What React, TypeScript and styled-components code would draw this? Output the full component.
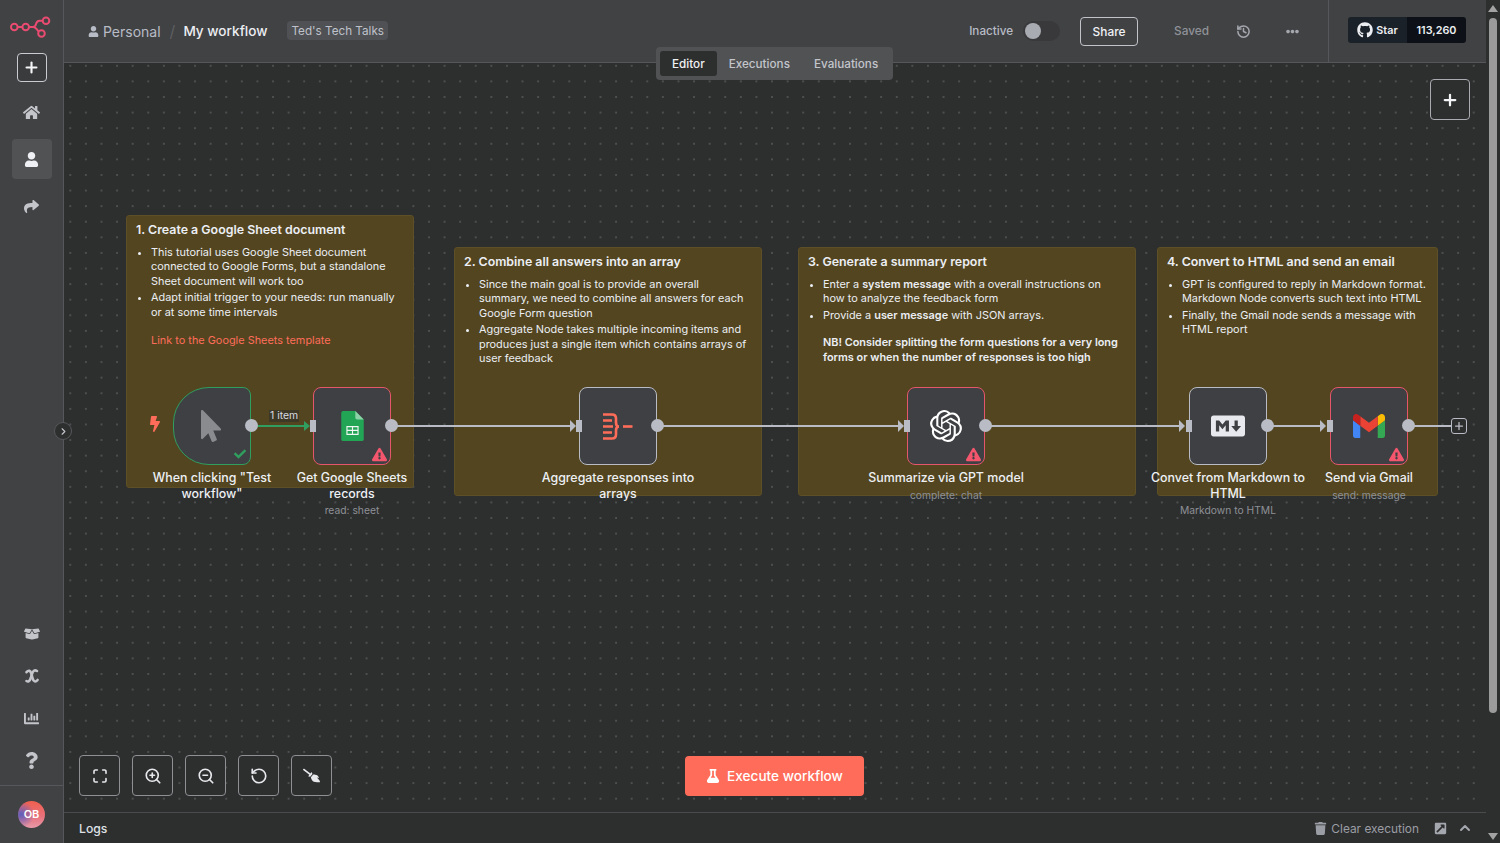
import React from 'react';
import { styled, createGlobalStyle } from 'styled-components';
import {
  FaBolt,
  FaBoxOpen,
  FaBroom,
  FaChartBar,
  FaCheck,
  FaEllipsisH,
  FaExclamationTriangle,
  FaExternalLinkSquareAlt,
  FaFlask,
  FaGithub,
  FaHome,
  FaMarkdown,
  FaMousePointer,
  FaQuestion,
  FaShare,
  FaTrash,
  FaUser,
} from 'react-icons/fa';
import { SiOpenai } from 'react-icons/si';
import { ChevronRight, ChevronUp, History, Maximize, Plus, RotateCcw, ZoomIn, ZoomOut } from 'lucide-react';

const CANVAS_X = 64;
const CANVAS_Y = 63;
const EDGE_Y = 426 - CANVAS_Y;
const LINE = '#b9bcc4';

const GlobalStyle = createGlobalStyle`
  html, body {
    margin: 0;
    height: 100%;
    overflow: hidden;
    background: #2d2e2e;
    font-family: Inter, "Liberation Sans", sans-serif;
  }
  * { box-sizing: border-box; }
`;

const Page = styled.div`
  display: flex;
  width: 1500px;
  height: 843px;
  overflow: hidden;
`;

const Sidebar = styled.aside`
  width: 64px;
  flex-shrink: 0;
  display: flex;
  flex-direction: column;
  align-items: center;
  background: #414244;
  border-right: 1px solid #56575a;
  color: #c3c5cb;
`;

const Logo = styled.svg`
  width: 44px;
  height: 28px;
  margin-top: 13px;
  margin-left: -1px;
`;

const AddButton = styled.button`
  width: 30px;
  height: 29px;
  margin-top: 12px;
  padding: 0;
  display: flex;
  align-items: center;
  justify-content: center;
  background: #3a3b3d;
  border: 1px solid #c9cbd0;
  border-radius: 4px;
  color: #f4f5f7;
`;

const SideItem = styled.div<{ $active?: boolean }>`
  width: 40px;
  height: 40px;
  display: flex;
  align-items: center;
  justify-content: center;
  border-radius: 4px;
  font-size: 16px;
  background: ${(p) => (p.$active ? '#515254' : 'transparent')};
  color: ${(p) => (p.$active ? '#eef0f4' : '#c3c5cb')};
`;

const TopItems = styled.div`
  display: flex;
  flex-direction: column;
  gap: 7px;
  margin-top: 10px;
`;

const BottomItems = styled.div`
  display: flex;
  flex-direction: column;
  gap: 2px;
  margin-top: auto;
`;

const AvatarRow = styled.div`
  width: 100%;
  height: 58px;
  margin-top: 5px;
  padding-bottom: 1px;
  border-top: 1px solid #56575a;
  display: flex;
  align-items: center;
  justify-content: center;
`;

const Avatar = styled.div`
  width: 27px;
  height: 27px;
  border-radius: 50%;
  display: flex;
  align-items: center;
  justify-content: center;
  font-size: 11px;
  font-weight: 600;
  color: #fff;
  background: radial-gradient(circle at 12% 50%, #5b5fc0 0, rgba(91, 95, 192, 0) 48%),
    linear-gradient(180deg, #f0604f 0%, #e8707a 55%, #e79aaa 100%);
`;

const Main = styled.main`
  position: relative;
  flex: 1;
  min-width: 0;
  display: flex;
  flex-direction: column;
`;

const Header = styled.header`
  height: 63px;
  flex-shrink: 0;
  display: flex;
  align-items: center;
  padding-left: 24px;
  background: #414244;
  border-bottom: 1px solid #56575a;
`;

const Crumb = styled.span`
  display: flex;
  align-items: center;
  gap: 4px;
  font-size: 14px;
  color: #b8bcc6;
`;

const Slash = styled.span`
  margin: 0 8px 0 9px;
  font-size: 16px;
  color: #5d5e61;
`;

const WorkflowName = styled.span`
  font-size: 13.6px;
  font-weight: 500;
  color: #eceef3;
`;

const Tag = styled.span`
  margin: -1px 0 0 20px;
  height: 19px;
  padding: 0 4px;
  display: flex;
  align-items: center;
  border-radius: 4px;
  background: #505154;
  font-size: 11.7px;
  color: #bfc2cb;
`;

const HeaderRight = styled.div`
  margin-left: auto;
  height: 100%;
  display: flex;
  align-items: center;
`;

const Inactive = styled.span`
  font-size: 11.7px;
  font-weight: 500;
  color: #b8bcc6;
`;

const Toggle = styled.span`
  width: 37px;
  height: 20px;
  margin-left: 10px;
  padding: 2px;
  border-radius: 10px;
  background: #39393b;
`;

const Knob = styled.span`
  display: block;
  width: 16px;
  height: 16px;
  border-radius: 50%;
  background: #a9abb3;
`;

const ShareButton = styled.button`
  width: 58px;
  height: 29px;
  margin-left: 20px;
  padding: 0;
  background: transparent;
  border: 1px solid #c1c3c9;
  border-radius: 4px;
  font: 500 11.9px Inter, sans-serif;
  color: #f0f1f4;
`;

const Saved = styled.span`
  margin-left: 36px;
  font-size: 11.8px;
  font-weight: 500;
  color: #8f9298;
`;

const IconSlot = styled.span<{ $left: number }>`
  display: flex;
  margin-left: ${(p) => p.$left}px;
  color: #a4a7ae;
`;

const GithubArea = styled.div`
  height: 100%;
  margin-left: 29px;
  padding: 0 20px 2px 19px;
  display: flex;
  align-items: center;
  border-left: 1px solid #56575a;
`;

const StarPart = styled.span`
  height: 26px;
  width: 59px;
  display: flex;
  align-items: center;
  justify-content: center;
  gap: 3px;
  background: #1b2128;
  border-radius: 3px 0 0 3px;
  font-size: 10.8px;
  font-weight: 600;
  color: #eceef1;
`;

const CountPart = styled.span`
  height: 26px;
  width: 59px;
  display: flex;
  align-items: center;
  justify-content: center;
  background: #0d1117;
  border-radius: 0 3px 3px 0;
  font-size: 10.8px;
  font-weight: 600;
  color: #eceef1;
`;

const Tabs = styled.nav`
  position: absolute;
  left: 592px;
  top: 47px;
  width: 237px;
  height: 33px;
  padding: 4px;
  display: flex;
  gap: 0;
  background: #515254;
  border-radius: 4px;
  z-index: 5;
`;

const Tab = styled.span<{ $active?: boolean }>`
  height: 25px;
  padding: 0 12px;
  display: flex;
  align-items: center;
  border-radius: 3px;
  font-size: 11.7px;
  font-weight: 500;
  background: ${(p) => (p.$active ? '#2d2e2e' : 'transparent')};
  color: ${(p) => (p.$active ? '#f0f1f4' : '#c3c5cb')};
`;

const Canvas = styled.section`
  position: relative;
  flex: 1;
  background-color: #2d2e2e;
  background-image: radial-gradient(circle, #6a6b6e 0.5px, transparent 0.9px);
  background-size: 15.6px 15.6px;
  background-position: -1.5px -5px;
`;

const Note = styled.div<{ $x: number; $y: number; $w: number; $h: number }>`
  position: absolute;
  left: ${(p) => p.$x - CANVAS_X}px;
  top: ${(p) => p.$y - CANVAS_Y}px;
  width: ${(p) => p.$w}px;
  height: ${(p) => p.$h}px;
  padding: 6px 10.5px 6px 9px;
  background: #524520;
  border: 1px solid #5d4f26;
  border-radius: 3px;
  color: #eceef3;
`;

const NoteTitle = styled.div`
  font-size: 12.4px;
  font-weight: 600;
  line-height: 16px;
`;

const NoteList = styled.ul`
  margin: 6.5px 0 0;
  padding-left: 15px;
  font-size: 10.9px;
  line-height: 14.5px;

  li + li {
    margin-top: 2px;
  }

  li::marker {
    font-size: 10px;
  }

  strong {
    font-weight: 600;
  }
`;

const NoteLink = styled.div`
  margin: 14px 0 0 15px;
  font-size: 10.9px;
  line-height: 14.5px;
  color: #ff6d5a;
`;

const NoteWarning = styled.div`
  margin: 13px 0 0 15px;
  font-size: 10.9px;
  font-weight: 600;
  line-height: 15px;
`;

const Edges = styled.svg`
  position: absolute;
  left: 0;
  top: 0;
  width: 100%;
  height: 100%;
  pointer-events: none;
`;

const Node = styled.div<{ $x: number }>`
  position: absolute;
  left: ${(p) => p.$x - CANVAS_X - 41}px;
  top: ${387 - CANVAS_Y}px;
  width: 160px;
  display: flex;
  flex-direction: column;
  align-items: center;
`;

const NodeBox = styled.div<{ $border: string; $trigger?: boolean }>`
  position: relative;
  width: 78px;
  height: 78px;
  display: flex;
  align-items: center;
  justify-content: center;
  background: #3f4043;
  border: 1.5px solid ${(p) => p.$border};
  border-radius: ${(p) => (p.$trigger ? '36px 8px 8px 36px' : '8px')};
`;

const InHandle = styled.span`
  position: absolute;
  left: -4.5px;
  top: 31.5px;
  width: 6px;
  height: 12px;
  background: ${LINE};
`;

const OutHandle = styled.span`
  position: absolute;
  right: -8px;
  top: 31px;
  width: 13px;
  height: 13px;
  border-radius: 50%;
  background: ${LINE};
`;

const WarnIcon = styled.span`
  position: absolute;
  right: 3px;
  bottom: 2px;
  display: flex;
  font-size: 15px;
  color: #f4566e;
`;

const CheckIcon = styled.span`
  position: absolute;
  right: 4px;
  bottom: 4px;
  display: flex;
  font-size: 12px;
  color: #2f9e5f;
`;

const Bolt = styled.span`
  position: absolute;
  left: -27px;
  top: 28px;
  display: flex;
  font-size: 16px;
  color: #ff6d5a;
`;

const CursorIcon = styled.span`
  display: flex;
  margin-left: -2px;
  font-size: 32px;
  color: #8a8b8e;
`;

const NodeLabel = styled.div`
  max-width: 156px;
  margin-top: 5px;
  font-size: 12.4px;
  font-weight: 500;
  line-height: 15.5px;
  text-align: center;
  color: #eef0f4;
`;

const NodeSub = styled.div`
  margin-top: 3px;
  font-size: 10.3px;
  line-height: 13px;
  text-align: center;
  color: #8e9196;
`;

const ItemCount = styled.span`
  position: absolute;
  left: ${269 - CANVAS_X}px;
  top: ${410 - CANVAS_Y}px;
  padding: 0 1px;
  background: rgba(45, 46, 46, 0.55);
  font-size: 10.4px;
  line-height: 12px;
  color: #d9dbe0;
`;

const EndPlus = styled.span`
  position: absolute;
  left: ${1451 - CANVAS_X}px;
  top: ${418 - CANVAS_Y}px;
  width: 16px;
  height: 16px;
  display: flex;
  align-items: center;
  justify-content: center;
  background: #2d2e2e;
  border: 1.5px solid ${LINE};
  border-radius: 3px;
  color: ${LINE};
`;

const CollapseToggle = styled.span`
  position: absolute;
  left: -10px;
  top: ${422 - CANVAS_Y}px;
  width: 18px;
  height: 18px;
  display: flex;
  align-items: center;
  justify-content: center;
  border-radius: 50%;
  background: #2d2e2e;
  border: 1px solid #56575a;
  color: #c3c5cb;
`;

const CanvasAdd = styled.button`
  position: absolute;
  left: ${1430 - CANVAS_X}px;
  top: ${79 - CANVAS_Y}px;
  width: 40px;
  height: 41px;
  padding: 0;
  display: flex;
  align-items: center;
  justify-content: center;
  background: #2d2e2e;
  border: 1px solid #a9abb0;
  border-radius: 4px;
  color: #f4f5f7;
`;

const CanvasTools = styled.div`
  position: absolute;
  left: 15px;
  bottom: 16px;
  display: flex;
  gap: 12px;
`;

const ToolButton = styled.button`
  width: 41px;
  height: 41px;
  padding: 0;
  display: flex;
  align-items: center;
  justify-content: center;
  background: #2d2e2e;
  border: 1px solid #8f9094;
  border-radius: 4px;
  color: #e8e9ed;
`;

const BroomGlyph = styled.span`
  display: flex;
  transform: scaleX(-1);
`;

const ExecuteButton = styled.button`
  position: absolute;
  left: ${685 - CANVAS_X}px;
  bottom: 16px;
  width: 179px;
  height: 40px;
  padding: 0;
  display: flex;
  align-items: center;
  justify-content: center;
  gap: 7px;
  background: #ff6d5a;
  border: none;
  border-radius: 4px;
  font: 500 13.6px Inter, sans-serif;
  color: #fff;
`;

const LogsBar = styled.footer`
  height: 31px;
  flex-shrink: 0;
  display: flex;
  align-items: center;
  padding: 0 13px 0 15px;
  background: #2d2e2e;
  border-top: 1px solid #4a4b4d;
`;

const LogsTitle = styled.span`
  font-size: 12.2px;
  font-weight: 500;
  color: #dfe1e6;
`;

const LogsActions = styled.div`
  margin-left: auto;
  display: flex;
  align-items: center;
  color: #9a9da4;
`;

const ClearText = styled.span`
  margin-left: 4px;
  font-size: 11.9px;
  color: #9a9da4;
`;

const Scrollbar = styled.div`
  width: 14px;
  flex-shrink: 0;
  display: flex;
  flex-direction: column;
  align-items: center;
  background: #2d2e2e;
`;

const ScrollArrow = styled.span<{ $down?: boolean }>`
  width: 0;
  height: 0;
  margin: ${(p) => (p.$down ? 'auto 0 3px' : '5px 0 0')};
  border-left: 5px solid transparent;
  border-right: 5px solid transparent;
  ${(p) => (p.$down ? 'border-top: 7px solid #a3a3a3;' : 'border-bottom: 7px solid #a3a3a3;')}
`;

const ScrollThumb = styled.span`
  width: 8px;
  height: 695px;
  margin-top: 6px;
  border-radius: 4px;
  background: #9b9b9b;
`;

function SheetsIcon() {
  return (
    <svg width="23" height="30" viewBox="0 0 24 32">
      <path d="M2 0h13l9 9v21a2 2 0 0 1-2 2H2a2 2 0 0 1-2-2V2a2 2 0 0 1 2-2z" fill="#23a556" />
      <path d="M15 0l9 9h-7a2 2 0 0 1-2-2z" fill="#8ed1a8" />
      <path d="M5.500 16h13v9.500h-13z M6.700 17.200v2.900h4.700v-2.900z M12.600 17.200v2.900h4.700v-2.900z M6.700 21.300v3h4.700v-3z M12.600 21.300v3h4.700v-3z" fill="#f1f7f3" fillRule="evenodd" />
    </svg>
  );
}

function AggregateIcon() {
  return (
    <svg width="30" height="27" viewBox="0 0 30 27" fill="none" stroke="#ff6d5a" strokeWidth="2.600">
      <path d="M0 1.500h9c2.500 0 4 1.500 4 4v4c0 2.500 1 4 3 4-2 0-3 1.500-3 4v4c0 2.500-1.500 4-4 4H0" />
      <path d="M0 7.500h9M0 13.500h10M0 19.500h9" />
      <path d="M20 13.500h9.500" />
    </svg>
  );
}

function GmailIcon() {
  return (
    <svg width="32" height="24" viewBox="52 42 88 66">
      <path fill="#4285f4" d="M58 108h14V74L52 59v43c0 3.32 2.69 6 6 6" />
      <path fill="#34a853" d="M120 108h14c3.32 0 6-2.69 6-6V59l-20 15" />
      <path fill="#fbbc04" d="M120 48v26l20-15v-8c0-7.42-8.47-11.65-14.4-7.2" />
      <path fill="#ea4335" d="M72 74V48l24 18 24-18v26L96 92" />
      <path fill="#c5221f" d="M52 51v8l20 15V48l-5.6-4.2c-5.94-4.45-14.4-.22-14.4 7.2" />
    </svg>
  );
}

function VariableIcon() {
  return (
    <svg width="16" height="16" viewBox="0 0 16 16" fill="none" stroke="currentColor" strokeWidth="2.600" strokeLinecap="round">
      <path d="M2.500 4.200C4.500 1.800 6.500 2.400 7.400 6l1.200 4.400c.9 3.400 3 4 5 1.600" />
      <path d="M13 3c-2.200-1.400-3.800-.6-5 2.800L6.800 10C5.600 13.400 4.200 14 2.500 13" />
    </svg>
  );
}

function N8nLogo() {
  return (
    <Logo viewBox="0 0 44 28" fill="none" stroke="#ea4b71" strokeWidth="2">
      <circle cx="5.300" cy="14" r="3.300" />
      <circle cx="16.700" cy="14" r="3.300" />
      <circle cx="37" cy="7.700" r="3.300" />
      <circle cx="32.500" cy="20.500" r="3.300" />
      <path d="M8.600 14H13.400M20 14h4c4.500 0 1.500-6.300 6.500-6.300h3.200M24 14c2.500 0 3.500 1.500 5.500 4.500" />
    </Logo>
  );
}

function EdgeLines() {
  const arrows = [576, 904, 1185, 1326];
  const x = (page: number) => page - CANVAS_X;
  return (
    <Edges>
      <path d={`M${x(251)} ${EDGE_Y}H${x(306)}`} stroke="#2f9e5f" strokeWidth="2" />
      <path d={`M${x(304)} ${EDGE_Y - 5}l6 5-6 5z`} fill="#2f9e5f" />
      <path d={`M${x(391)} ${EDGE_Y}H${x(572)}`} stroke={LINE} strokeWidth="2" />
      <path d={`M${x(657)} ${EDGE_Y}H${x(900)}`} stroke={LINE} strokeWidth="2" />
      <path d={`M${x(985)} ${EDGE_Y}H${x(1181)}`} stroke={LINE} strokeWidth="2" />
      <path d={`M${x(1267)} ${EDGE_Y}H${x(1322)}`} stroke={LINE} strokeWidth="2" />
      <path d={`M${x(1408)} ${EDGE_Y}H${x(1451)}`} stroke={LINE} strokeWidth="2" />
      {arrows.map((a) => (
        <path key={a} d={`M${x(a - 6)} ${EDGE_Y - 6}l6 6-6 6z`} fill={LINE} />
      ))}
    </Edges>
  );
}

export default function App() {
  return (
    <>
      <GlobalStyle />
      <Page>
        <Sidebar>
          <N8nLogo />
          <AddButton>
            <Plus size={17} strokeWidth={3} />
          </AddButton>
          <TopItems>
            <SideItem><FaHome size={17} /></SideItem>
            <SideItem $active><FaUser size={15} /></SideItem>
            <SideItem><FaShare size={15} /></SideItem>
          </TopItems>
          <BottomItems>
            <SideItem><FaBoxOpen size={16} /></SideItem>
            <SideItem><VariableIcon /></SideItem>
            <SideItem><FaChartBar size={15} /></SideItem>
            <SideItem><FaQuestion size={17} /></SideItem>
          </BottomItems>
          <AvatarRow>
            <Avatar>OB</Avatar>
          </AvatarRow>
        </Sidebar>

        <Main>
          <Header>
            <Crumb>
              <FaUser size={11} />
              Personal
            </Crumb>
            <Slash>/</Slash>
            <WorkflowName>My workflow</WorkflowName>
            <Tag>Ted's Tech Talks</Tag>
            <HeaderRight>
              <Inactive>Inactive</Inactive>
              <Toggle><Knob /></Toggle>
              <ShareButton>Share</ShareButton>
              <Saved>Saved</Saved>
              <IconSlot $left={27}><History size={15} strokeWidth={2.4} /></IconSlot>
              <IconSlot $left={35}><FaEllipsisH size={13} /></IconSlot>
              <GithubArea>
                <StarPart><FaGithub size={16} />Star</StarPart>
                <CountPart>113,260</CountPart>
              </GithubArea>
            </HeaderRight>
          </Header>

          <Tabs>
            <Tab $active>Editor</Tab>
            <Tab>Executions</Tab>
            <Tab>Evaluations</Tab>
          </Tabs>

          <Canvas>
            <Note $x={126} $y={215} $w={288} $h={273}>
              <NoteTitle>1. Create a Google Sheet document</NoteTitle>
              <NoteList>
                <li>This tutorial uses Google Sheet document connected to Google Forms, but a standalone Sheet document will work too</li>
                <li>Adapt initial trigger to your needs: run manually or at some time intervals</li>
              </NoteList>
              <NoteLink>Link to the Google Sheets template</NoteLink>
            </Note>
            <Note $x={454} $y={247} $w={308} $h={249}>
              <NoteTitle>2. Combine all answers into an array</NoteTitle>
              <NoteList>
                <li>Since the main goal is to provide an overall summary, we need to combine all answers for each Google Form question</li>
                <li>Aggregate Node takes multiple incoming items and produces just a single item which contains arrays of user feedback</li>
              </NoteList>
            </Note>
            <Note $x={798} $y={247} $w={338} $h={249}>
              <NoteTitle>3. Generate a summary report</NoteTitle>
              <NoteList>
                <li>Enter a <strong>system message</strong> with a overall instructions on how to analyze the feedback form</li>
                <li>Provide a <strong>user message</strong> with JSON arrays.</li>
              </NoteList>
              <NoteWarning>NB! Consider splitting the form questions for a very long forms or when the number of responses is too high</NoteWarning>
            </Note>
            <Note $x={1157} $y={247} $w={281} $h={249}>
              <NoteTitle>4. Convert to HTML and send an email</NoteTitle>
              <NoteList>
                <li>GPT is configured to reply in Markdown format. Markdown Node converts such text into HTML</li>
                <li>Finally, the Gmail node sends a message with HTML report</li>
              </NoteList>
            </Note>

            <EdgeLines />
            <ItemCount>1 item</ItemCount>

            <Node $x={173}>
              <NodeBox $border="#2f9e5f" $trigger>
                <Bolt><FaBolt /></Bolt>
                <CursorIcon><FaMousePointer /></CursorIcon>
                <CheckIcon><FaCheck /></CheckIcon>
                <OutHandle />
              </NodeBox>
              <NodeLabel>When clicking "Test workflow"</NodeLabel>
            </Node>

            <Node $x={313}>
              <NodeBox $border="#e5566a">
                <InHandle />
                <SheetsIcon />
                <WarnIcon><FaExclamationTriangle /></WarnIcon>
                <OutHandle />
              </NodeBox>
              <NodeLabel>Get Google Sheets records</NodeLabel>
              <NodeSub>read: sheet</NodeSub>
            </Node>

            <Node $x={579}>
              <NodeBox $border={LINE}>
                <InHandle />
                <AggregateIcon />
                <OutHandle />
              </NodeBox>
              <NodeLabel>Aggregate responses into arrays</NodeLabel>
            </Node>

            <Node $x={907}>
              <NodeBox $border="#e5566a">
                <InHandle />
                <SiOpenai size={32} color="#fff" />
                <WarnIcon><FaExclamationTriangle /></WarnIcon>
                <OutHandle />
              </NodeBox>
              <NodeLabel>Summarize via GPT model</NodeLabel>
              <NodeSub>complete: chat</NodeSub>
            </Node>

            <Node $x={1189}>
              <NodeBox $border={LINE}>
                <InHandle />
                <FaMarkdown size={34} color="#e8e9ee" />
                <OutHandle />
              </NodeBox>
              <NodeLabel>Convet from Markdown to HTML</NodeLabel>
              <NodeSub>Markdown to HTML</NodeSub>
            </Node>

            <Node $x={1330}>
              <NodeBox $border="#e5566a">
                <InHandle />
                <GmailIcon />
                <WarnIcon><FaExclamationTriangle /></WarnIcon>
                <OutHandle />
              </NodeBox>
              <NodeLabel>Send via Gmail</NodeLabel>
              <NodeSub>send: message</NodeSub>
            </Node>

            <EndPlus><Plus size={12} strokeWidth={2.5} /></EndPlus>
            <CollapseToggle><ChevronRight size={11} strokeWidth={2.5} /></CollapseToggle>
            <CanvasAdd><Plus size={18} strokeWidth={3} /></CanvasAdd>

            <CanvasTools>
              <ToolButton><Maximize size={16} strokeWidth={2.4} /></ToolButton>
              <ToolButton><ZoomIn size={18} strokeWidth={2.2} /></ToolButton>
              <ToolButton><ZoomOut size={18} strokeWidth={2.2} /></ToolButton>
              <ToolButton><RotateCcw size={18} strokeWidth={2.2} /></ToolButton>
              <ToolButton><BroomGlyph><FaBroom size={17} /></BroomGlyph></ToolButton>
            </CanvasTools>

            <ExecuteButton><FaFlask size={14} />Execute workflow</ExecuteButton>
          </Canvas>

          <LogsBar>
            <LogsTitle>Logs</LogsTitle>
            <LogsActions>
              <FaTrash size={13} />
              <ClearText>Clear execution</ClearText>
              <IconSlot $left={15}><FaExternalLinkSquareAlt size={13} /></IconSlot>
              <IconSlot $left={10}><ChevronUp size={16} strokeWidth={3} /></IconSlot>
            </LogsActions>
          </LogsBar>
        </Main>

        <Scrollbar>
          <ScrollArrow />
          <ScrollThumb />
          <ScrollArrow $down />
        </Scrollbar>
      </Page>
    </>
  );
}
